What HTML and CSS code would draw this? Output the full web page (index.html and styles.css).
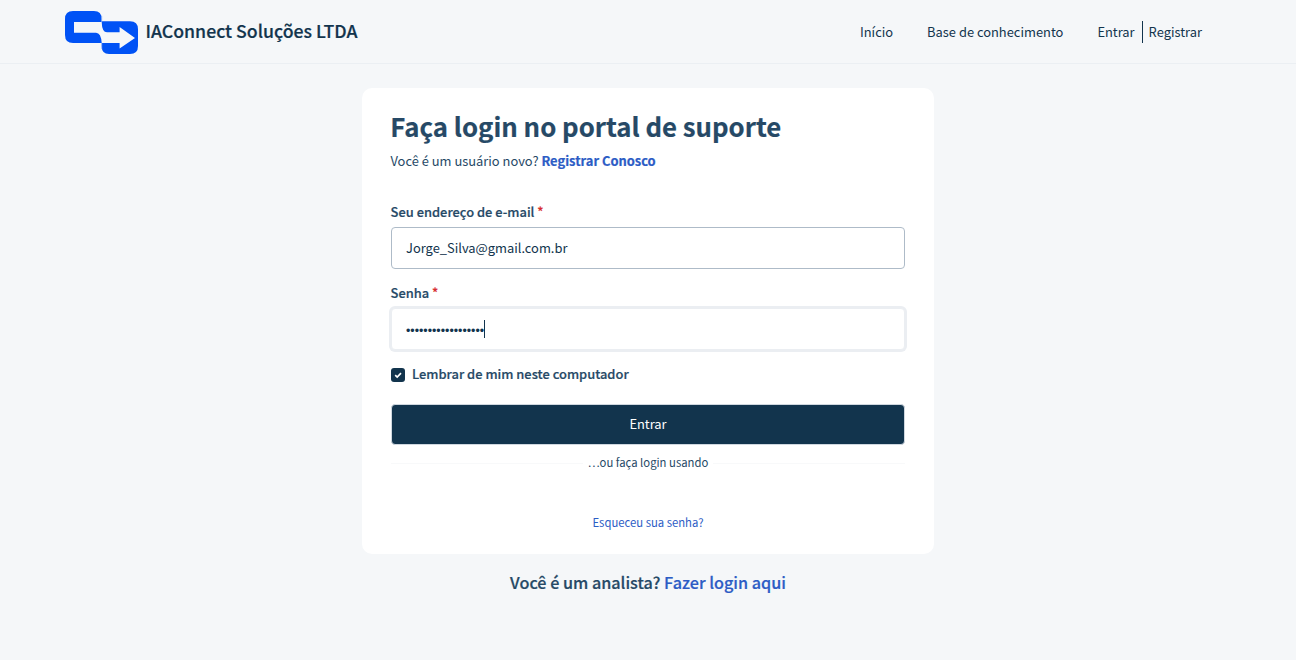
FILE: index.html
```html
<!DOCTYPE html>
<html lang="pt-BR">
<head>
    <meta charset="UTF-8">
    <meta name="viewport" content="width=device-width, initial-scale=1.0">
    <title>Entrar - IAConnect Soluções LTDA</title>
    <link rel="stylesheet" href="styles.css">
</head>
<body>
    <header class="topbar">
        <a href="#" class="brand">
            <svg class="brand-logo" viewBox="0 0 73 43" width="73" height="43" aria-hidden="true">
                <path fill="#0052f5" d="M8 0H29Q36.7 0 36.7 8V10.3H65Q73 10.3 73 18.3V35Q73 43 65 43H44Q36.7 43 36.7 35V32H8Q0 32 0 24V8Q0 0 8 0Z"/>
                <path fill="#f5f7f9" d="M9 11H36.7Q37 21.3 42 21.3H54.6V16L70 27L54.6 37.6V32H36.7Q36 21.7 31 21.7H9Z"/>
                <path fill="none" stroke="#8fb2f7" stroke-width="0.8" d="M36.7 5V11M36.7 32V38"/>
            </svg>
            <span class="brand-name">IAConnect Soluções LTDA</span>
        </a>
        <nav class="menu">
            <a href="#" class="menu-home">Início</a>
            <a href="#" class="menu-base">Base de conhecimento</a>
            <a href="#" class="menu-login">Entrar</a>
            <a href="#" class="menu-register">Registrar</a>
        </nav>
    </header>

    <main class="login-page">
        <section class="login-card">
            <h1>Faça login no portal de suporte</h1>
            <p class="signup">Você é um usuário novo? <a href="#">Registrar Conosco</a></p>

            <form id="loginForm">
                <div class="form-group">
                    <label for="email">Seu endereço de e-mail <span class="required">*</span></label>
                    <input type="text" id="email" value="Jorge_Silva@gmail.com.br">
                </div>

                <div class="form-group">
                    <label for="password">Senha <span class="required">*</span></label>
                    <div class="password-field" id="password" tabindex="0">
                        <span class="dots">••••••••••••••••••</span><span class="caret"></span>
                    </div>
                </div>

                <div class="remember">
                    <svg class="check" viewBox="0 0 14 14" width="14" height="14" aria-hidden="true">
                        <rect width="14" height="14" rx="3" fill="#12344d"/>
                        <path d="M4.2 7.1L6.2 9L10 5.2" fill="none" stroke="#fff" stroke-width="1.7"/>
                    </svg>
                    <span>Lembrar de mim neste computador</span>
                </div>

                <button type="button" class="btn-login">Entrar</button>
            </form>

            <div class="divider"><span>…ou faça login usando</span></div>
            <a href="#" class="forgot">Esqueceu sua senha?</a>
        </section>

        <p class="agent">Você é um analista? <a href="#">Fazer login aqui</a></p>
    </main>
</body>
</html>
```
FILE: styles.css
```css
:root {
    --bg: #f5f7f9;
    --dark: #12344d;
    --text: #264966;
    --link: #2c5cc5;
    --border: #aebbc8;
    --error: #d72d30;
}

* {
    margin: 0;
    padding: 0;
    box-sizing: border-box;
}

body {
    background: var(--bg);
    color: var(--text);
    font-family: 'Noto Sans CJK SC', 'Open Sans', sans-serif;
    font-size: 12.9px;
    line-height: 20px;
    min-height: 100vh;
}

a {
    color: var(--link);
    text-decoration: none;
}

.topbar {
    display: flex;
    justify-content: space-between;
    align-items: center;
    height: 64px;
    padding: 0 94px 0 65px;
    border-bottom: 1px solid #ebeff3;
}

.brand {
    display: flex;
    align-items: center;
    gap: 7.5px;
    padding-top: 1px;
    color: var(--dark);
}

.brand-name {
    padding-bottom: 4px;
    font-size: 17.7px;
    font-weight: 500;
    line-height: 24px;
    -webkit-text-stroke: 0.2px;
}

.menu {
    display: flex;
    align-items: center;
}

.menu a {
    color: var(--dark);
    line-height: 22px;
}

.menu-home,
.menu-base {
    margin-right: 34px;
}

.menu .menu-register {
    margin-left: 7px;
    padding-left: 6px;
    border-left: 1px solid var(--dark);
}

.login-page {
    display: flex;
    flex-direction: column;
    align-items: center;
    padding-top: 24px;
}

.login-card {
    width: 572px;
    height: 466px;
    padding: 21px 29px;
    background: #fff;
    border-radius: 10px;
}

h1 {
    margin-left: -0.7px;
    font-size: 25.75px;
    font-weight: 700;
    line-height: 34px;
    -webkit-text-stroke: 0.2px;
}

.signup {
    margin-top: 8px;
    margin-left: -0.6px;
    margin-bottom: 31px;
}

.signup a {
    font-weight: 700;
    -webkit-text-stroke: 0.2px;
}

label {
    display: block;
    margin-bottom: 5px;
    margin-left: -0.4px;
    font-weight: 500;
    -webkit-text-stroke: 0.2px;
}

.required {
    color: var(--error);
}

.form-group {
    margin-bottom: 14px;
}

.form-group input,
.password-field {
    display: flex;
    align-items: center;
    width: 100%;
    height: 42px;
    padding: 0 14px;
    background: #fff;
    border: 1px solid var(--border);
    border-radius: 4px;
    color: var(--dark);
    font-family: inherit;
    font-size: 12.9px;
}

.form-group input {
    padding-bottom: 2px;
}

.password-field {
    border-color: #ebeef2;
    box-shadow: 0 0 0 2px #ebeef2;
    outline: none;
}

.dots {
    padding-top: 3px;
    font-family: 'Liberation Sans', sans-serif;
    font-size: 12.4px;
}

.caret {
    width: 1px;
    height: 18px;
    background: var(--dark);
}

.remember {
    display: flex;
    align-items: center;
    gap: 7px;
    font-weight: 500;
    -webkit-text-stroke: 0.2px;
}

.check {
    margin-top: 2px;
}

.btn-login {
    display: block;
    width: 100%;
    height: 41px;
    margin-top: 20px;
    padding-bottom: 2px;
    background: var(--dark);
    border: 1px solid #cfd7df;
    border-radius: 4px;
    color: #fff;
    font-family: inherit;
    font-size: 12.9px;
    cursor: pointer;
}

.divider {
    display: flex;
    align-items: center;
    gap: 5px;
    margin-top: 8px;
    font-size: 11.3px;
}

.divider span {
    padding-bottom: 2px;
    line-height: 18px;
}

.divider::before,
.divider::after {
    content: "";
    flex: 1;
    height: 1px;
    background: #f8f9fa;
}

.forgot {
    display: block;
    margin-top: 39px;
    font-size: 11.3px;
    text-align: center;
}

.agent {
    margin-top: 16px;
    font-size: 16.2px;
    font-weight: 500;
    line-height: 24px;
    -webkit-text-stroke: 0.2px;
}
```
